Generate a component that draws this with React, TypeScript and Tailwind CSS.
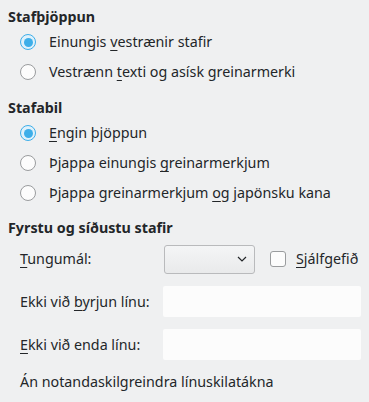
import React from "react";

function Radio({ checked, children }: { checked?: boolean; children: React.ReactNode }) {
    return (
        <div className="h-[30px] flex items-center pl-[20px]">
            {checked ? (
                <span className="w-[16px] h-[16px] rounded-full border border-[#3daee9] bg-[#dff1fb] flex items-center justify-center">
                    <span className="w-[9px] h-[9px] rounded-full bg-[#3daee9]" />
                </span>
            ) : (
                <span className="w-[16px] h-[16px] rounded-full border border-[#9a9c9e] bg-[#fcfcfc]" />
            )}
            <span className="ml-[13px]">{children}</span>
        </div>
    );
}

function U({ children }: { children: React.ReactNode }) {
    return <span className="underline underline-offset-[3px] decoration-1">{children}</span>;
}

export default function App() {
    return (
        <div
            className="w-[369px] h-[402px] bg-[#eff0f1] text-[#232629] text-[14.3px] overflow-hidden"
            style={{ fontFamily: '"Noto Sans", sans-serif' }}
        >
            <div className="pt-[7px]">
                {/* Stafþjöppun */}
                <div className="h-[20px] leading-[20px] pl-[8px] font-bold">Stafþjöppun</div>
                <Radio checked>
                    Einungis <U>v</U>estrænir stafir
                </Radio>
                <Radio>
                    Vestrænn <U>t</U>exti og asísk greinarmerki
                </Radio>

                {/* Stafabil */}
                <div className="mt-[11px] h-[20px] leading-[20px] pl-[8px] font-bold">Stafabil</div>
                <Radio checked>
                    <U>E</U>ngin þjöppun
                </Radio>
                <Radio>
                    Þjappa einungis <U>g</U>reinarmerkjum
                </Radio>
                <Radio>
                    Þjappa greinarmerkjum <U>o</U>g japönsku kana
                </Radio>

                {/* Fyrstu og síðustu stafir */}
                <div className="mt-[10px] h-[20px] leading-[20px] pl-[8px] font-bold">Fyrstu og síðustu stafir</div>

                <div className="mt-[6px] h-[30px] flex items-center pl-[20px]">
                    <span className="w-[144px] shrink-0">
                        <U>T</U>ungumál:
                    </span>
                    <div className="w-[91px] h-[29px] shrink-0 rounded-[3px] border border-[#b9babc] bg-gradient-to-b from-[#f4f5f6] to-[#e9eaeb] flex items-center justify-end pr-[7px]">
                        <svg width="10" height="6" viewBox="0 0 10 6" fill="none">
                            <path d="M1 1l4 4 4-4" stroke="#232629" strokeWidth="1.2" />
                        </svg>
                    </div>
                    <span className="ml-[15px] w-[16px] h-[16px] shrink-0 rounded-[3px] border border-[#9a9c9e] bg-[#fcfcfc]" />
                    <span className="ml-[10px] whitespace-nowrap">
                        <U>S</U>jálfgefið
                    </span>
                </div>

                <div className="mt-[12px] h-[31px] flex items-center pl-[20px]">
                    <span className="w-[143px] shrink-0">
                        Ekki við <U>b</U>yrjun línu:
                    </span>
                    <div className="w-[198px] h-[31px] bg-[#fcfcfc] rounded-[2px]" />
                </div>

                <div className="mt-[12px] h-[31px] flex items-center pl-[20px]">
                    <span className="w-[143px] shrink-0">
                        <U>E</U>kki við enda línu:
                    </span>
                    <div className="w-[198px] h-[31px] bg-[#fcfcfc] rounded-[2px]" />
                </div>

                <div className="mt-[12px] h-[20px] leading-[20px] pl-[20px]">Án notandaskilgreindra línuskilatákna</div>
            </div>
        </div>
    );
}
